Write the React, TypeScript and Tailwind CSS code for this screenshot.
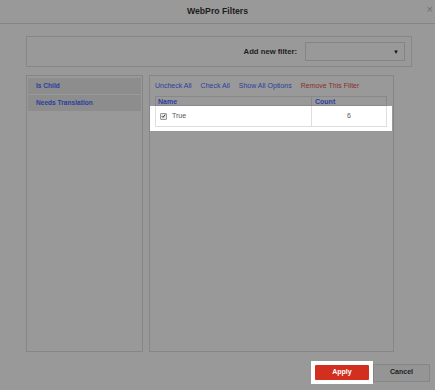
export default function App() {
  const links = ["Uncheck All", "Check All", "Show All Options"];
  return (
    <div className="w-[435px] h-[390px] bg-[#999999] flex flex-col overflow-hidden font-['Liberation_Sans',Arial,sans-serif]">
      <header className="relative h-[24px] shrink-0 border-b border-[#858585] flex items-center justify-center">
        <h1 className="text-[8.7px] font-bold text-[#1c1c1c]">WebPro Filters</h1>
        <span className="absolute right-[2px] top-[4px] text-[11px] leading-none text-[#707070]">×</span>
      </header>

      <div className="flex flex-col pl-[26px] pr-[23px] pt-[12px]">
        <div className="h-[31px] border border-[#878787] flex items-center justify-end gap-[8px] pr-[6px]">
          <span className="text-[7.7px] font-bold text-[#1e1e1e]">Add new filter:</span>
          <div className="w-[100px] h-[19px] border border-[#848484] flex items-center justify-end pr-[5px]">
            <span className="text-[6px] leading-none text-[#111]">▼</span>
          </div>
        </div>

        <div className="mt-[8px] flex gap-[6px] h-[277px]">
          <div className="w-[117px] border border-[#868686] px-[1px] pt-[2px] flex flex-col gap-[1px]">
            <div className="h-[16px] bg-[#8d8d8d] flex items-center pl-[8px] text-[6.6px] font-bold text-[#2b3ea0]">Is Child</div>
            <div className="h-[16px] bg-[#8d8d8d] flex items-center pl-[8px] text-[6.6px] font-bold text-[#2b3ea0]">Needs Translation</div>
          </div>

          <div className="w-[245px] border border-[#868686] pl-[5px] pt-[6px]">
            <div className="flex gap-[9px] text-[7px] leading-[8px]">
              {links.map((l) => (
                <span key={l} className="text-[#2b3ea0]">{l}</span>
              ))}
              <span className="text-[#8a2e2e]">Remove This Filter</span>
            </div>

            <div className="mt-[6px] w-[232px]">
              <div className="h-[10px] flex border border-[#888888] text-[7px] font-bold text-[#2b3ea0]">
                <div className="w-[156px] border-r border-[#888888] pl-[2px] leading-[9px]">Name</div>
                <div className="flex-1 pl-[3px] leading-[9px]">Count</div>
              </div>
              <div className="-mx-[5px] px-[5px] pb-[4px] bg-white">
                <div className="h-[21px] flex border border-t-0 border-[#dedede] text-[7px]">
                  <div className="w-[156px] border-r border-[#dedede] flex items-center pl-[4px] gap-[5px]">
                    <span className="w-[7px] h-[7px] rounded-[1px] border border-[#9a9a9a] bg-[#e6e6e6] flex items-center justify-center">
                      <svg viewBox="0 0 8 8" className="w-[6px] h-[6px]">
                        <path d="M1.2 4.2 L3.2 6.2 L6.8 1.6" fill="none" stroke="#222" strokeWidth="1.4" />
                      </svg>
                    </span>
                    <span className="text-[#555555]">True</span>
                  </div>
                  <div className="flex-1 flex items-center justify-center text-[#555555]">6</div>
                </div>
              </div>
            </div>
          </div>
        </div>
      </div>

      <div className="mt-[9px] flex justify-end items-center pr-[5px]">
        <div className="bg-white p-[4px]">
          <div className="w-[54px] h-[15px] bg-[#d32f1f] rounded-[1px] flex items-center justify-center text-[7px] font-bold text-white">
            Apply
          </div>
        </div>
        <div className="w-[57px] h-[18px] border border-[#858585] bg-[#959595] rounded-[1px] flex items-center justify-center text-[7px] font-bold text-[#1f1f1f]">
          Cancel
        </div>
      </div>
    </div>
  );
}
